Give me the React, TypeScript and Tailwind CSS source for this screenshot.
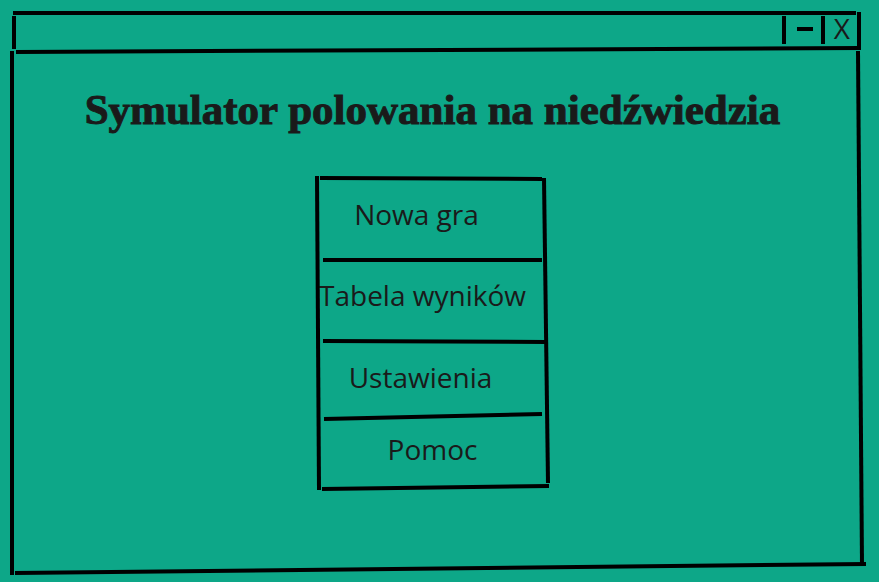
type Stroke = [x1: number, y1: number, x2: number, y2: number];

function Sketch({ width, height, strokes }: { width: number; height: number; strokes: Stroke[] }) {
  return (
    <svg
      className="pointer-events-none absolute inset-0 h-full w-full overflow-visible"
      viewBox={`0 0 ${width} ${height}`}
      preserveAspectRatio="none"
      aria-hidden="true"
    >
      {strokes.map(([x1, y1, x2, y2], i) => (
        <line key={i} x1={x1} y1={y1} x2={x2} y2={y2} stroke="#000" strokeWidth={4} vectorEffect="non-scaling-stroke" />
      ))}
    </svg>
  );
}

const barStrokes: Stroke[] = [
  [3, 3, 846, 3],
  [4, 6, 4, 39],
  [6, 42, 851, 38],
  [849, 2, 849, 40],
];

const bodyStrokes: Stroke[] = [
  [2, 1, 2, 525],
  [5, 523, 856, 514],
  [848, 1, 852, 515],
];

const menuStrokes: Stroke[] = [
  [0, -2, 2, 312],
  [3, 0, 225, 1],
  [227, 0, 231, 305],
  [6, 82, 225, 82],
  [6, 163, 229, 164],
  [7, 241, 225, 236],
  [5, 311, 232, 308],
];

const items = [
  { label: "Nowa gra", box: "h-[81px] pr-8" },
  { label: "Tabela wyników", box: "h-[82px] pr-5" },
  { label: "Ustawienia", box: "h-[72px] pr-6" },
  { label: "Pomoc", box: "h-[75px]" },
];

export default function App() {
  return (
    <div className="flex min-h-screen flex-col bg-[#0da788] pt-[10px] pr-[14px] pb-[7px] pl-[10px] font-['Open_Sans',sans-serif] text-[#1a1a1a]">
      <header className="relative flex h-10 items-center justify-end pr-[15px]">
        <Sketch width={855} height={40} strokes={barStrokes} />
        <button
          type="button"
          aria-label="Minimalizuj"
          className="flex h-7 w-[39px] items-center justify-center border-l-4 border-black pb-[2px] pl-1"
        >
          <span className="h-1 w-4 bg-black" />
        </button>
        <button
          type="button"
          aria-label="Zamknij"
          className="flex h-7 items-center border-l-4 border-black pb-1 pl-[9px] text-[28px] leading-7"
        >
          X
        </button>
      </header>

      <main className="relative flex flex-1 flex-col items-center pt-9 pr-[10px]">
        <Sketch width={855} height={525} strokes={bodyStrokes} />
        <h1 className="text-center font-['Liberation_Serif',serif] text-[43px] leading-12 font-bold [-webkit-text-stroke:1px_#1a1a1a]">
          Symulator polowania na niedźwiedzia
        </h1>
        <nav aria-label="Menu" className="relative mt-11 w-[232px]">
          <Sketch width={232} height={310} strokes={menuStrokes} />
          <ul>
            {items.map(({ label, box }) => (
              <li key={label} className={`flex items-start justify-center pt-4 ${box}`}>
                <button type="button" className="text-[28px] leading-10 whitespace-nowrap">
                  {label}
                </button>
              </li>
            ))}
          </ul>
        </nav>
      </main>
    </div>
  );
}
